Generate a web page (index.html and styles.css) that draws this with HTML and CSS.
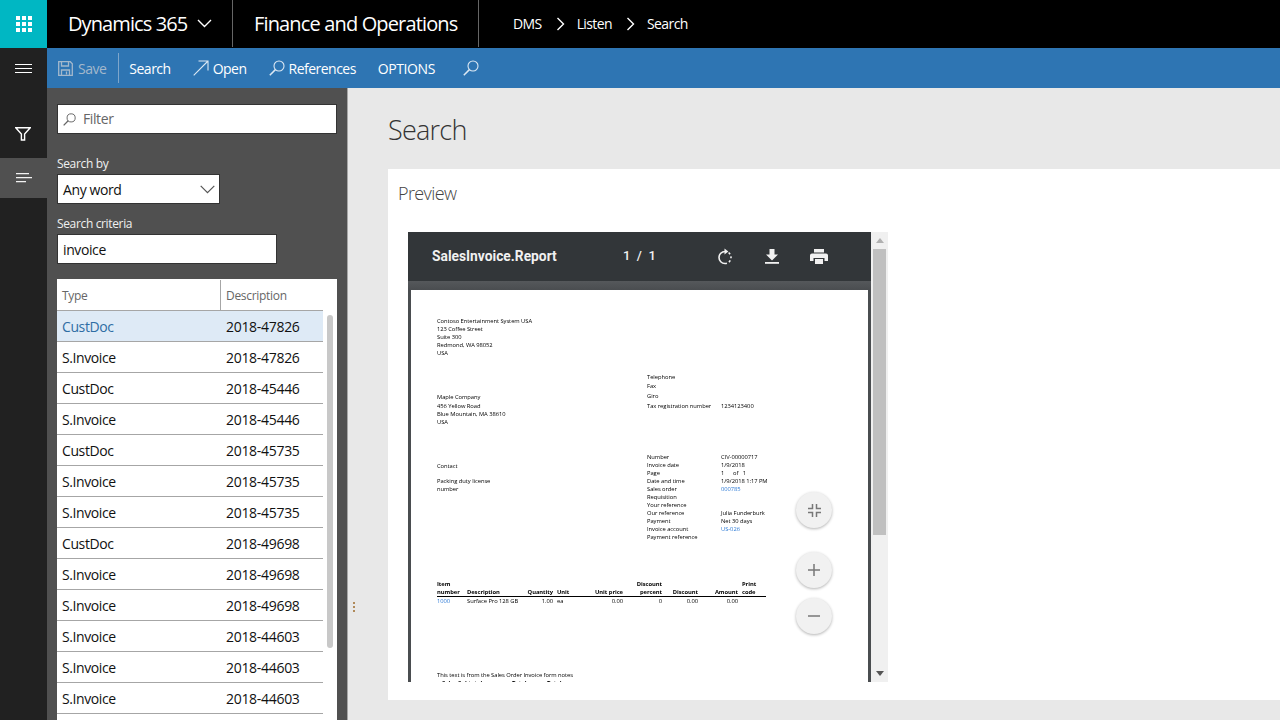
FILE: index.html
```html
<!DOCTYPE html>
<html lang="en">
<head>
<meta charset="utf-8">
<title>Search</title>
<link rel="stylesheet" href="styles.css">
</head>
<body>
<header class="topbar">
  <div class="waffle">
    <svg width="16" height="16" viewBox="0 0 16 16" fill="#fff"><rect x="0" y="0" width="4" height="4"/><rect x="6" y="0" width="4" height="4"/><rect x="12" y="0" width="4" height="4"/><rect x="0" y="6" width="4" height="4"/><rect x="6" y="6" width="4" height="4"/><rect x="12" y="6" width="4" height="4"/><rect x="0" y="12" width="4" height="4"/><rect x="6" y="12" width="4" height="4"/><rect x="12" y="12" width="4" height="4"/></svg>
  </div>
  <div class="brand">
    <span class="brand-text">Dynamics 365</span>
    <svg class="brand-chev" width="15" height="9" viewBox="0 0 15 9" fill="none" stroke="#fff" stroke-width="1.4"><path d="M1 1l6.5 6.5L14 1"/></svg>
  </div>
  <div class="app">Finance and Operations</div>
  <nav class="crumbs">
    <span>DMS</span>
    <svg width="9" height="14" viewBox="0 0 9 14" fill="none" stroke="#fff" stroke-width="1.4"><path d="M1.5 1l6 6-6 6"/></svg>
    <span>Listen</span>
    <svg width="9" height="14" viewBox="0 0 9 14" fill="none" stroke="#fff" stroke-width="1.4"><path d="M1.5 1l6 6-6 6"/></svg>
    <span>Search</span>
  </nav>
</header>

<div class="shell">
  <aside class="rail">
    <div class="rail-btn rail-menu">
      <svg width="17" height="10" viewBox="0 0 17 10" stroke="#fff" stroke-width="1"><path d="M0 .5h17M0 4.500h17M0 8.500h17"/></svg>
    </div>
    <div class="rail-btn rail-filter">
      <svg width="16" height="14" viewBox="0 0 16 14" fill="none" stroke="#fff" stroke-width="1.4"><path d="M.8.8h14.400L9.600 7v6H6.400V7z"/></svg>
    </div>
    <div class="rail-btn rail-active">
      <svg width="16" height="10" viewBox="0 0 16 10" stroke="#f2f2f2" stroke-width="1.3"><path d="M0 .7h13M0 4.700h16M0 8.700h10"/></svg>
    </div>
  </aside>

  <div class="workspace">
    <div class="actions">
      <span class="act act-save">
        <svg width="15" height="15" viewBox="0 0 15 15" fill="none" stroke="#a3b8cc" stroke-width="1.3"><path d="M.7.7h11.600l2 2v11.600H.7z"/><path d="M3.500.7v4.300h7V.7M3.500 14.300V9h8v5.300"/><path d="M8.500 10.500v3"/></svg>
        <span>Save</span>
      </span>
      <span class="act-sep"></span>
      <span class="act act-search">Search</span>
      <span class="act act-open">
        <svg width="16" height="16" viewBox="0 0 16 16" fill="none" stroke="#dce8f3" stroke-width="1.100"><path d="M.7 15.300L15 1M5.500 1H15v9.500"/></svg>
        <span>Open</span>
      </span>
      <span class="act act-refs">
        <svg class="lens" width="16" height="16" viewBox="0 0 16 16" fill="none" stroke="#dce8f3" stroke-width="1.100"><circle cx="10" cy="6" r="5"/><path d="M6.400 9.600L.8 15.200" stroke-width="1.500"/></svg>
        <span>References</span>
      </span>
      <span class="act act-options">OPTIONS</span>
      <span class="act act-find">
        <svg class="lens" width="16" height="16" viewBox="0 0 16 16" fill="none" stroke="#dce8f3" stroke-width="1.100"><circle cx="10" cy="6" r="5"/><path d="M6.400 9.600L.8 15.200" stroke-width="1.500"/></svg>
      </span>
    </div>

    <div class="body">
      <section class="panel">
        <div class="field filter">
          <svg width="13" height="13" viewBox="0 0 16 16" fill="none" stroke="#666" stroke-width="1.200"><circle cx="10" cy="6" r="5"/><path d="M6.400 9.600L.8 15.200" stroke-width="1.600"/></svg>
          <span>Filter</span>
        </div>
        <label class="lbl lbl-by">Search by</label>
        <div class="field select">
          <span>Any word</span>
          <svg width="15" height="9" viewBox="0 0 15 9" fill="none" stroke="#555" stroke-width="1.200"><path d="M.7.8l6.800 6.800L14.300.8"/></svg>
        </div>
        <label class="lbl lbl-crit">Search criteria</label>
        <div class="field criteria"><span>invoice</span></div>

        <div class="grid">
          <div class="grid-head">
            <div class="col-type">Type</div>
            <div class="col-desc">Description</div>
          </div>
          <div class="grid-body">
            <div class="row row-sel"><span class="c1">CustDoc</span><span class="c2">2018-47826</span></div>
            <div class="row"><span class="c1">S.Invoice</span><span class="c2">2018-47826</span></div>
            <div class="row"><span class="c1">CustDoc</span><span class="c2">2018-45446</span></div>
            <div class="row"><span class="c1">S.Invoice</span><span class="c2">2018-45446</span></div>
            <div class="row"><span class="c1">CustDoc</span><span class="c2">2018-45735</span></div>
            <div class="row"><span class="c1">S.Invoice</span><span class="c2">2018-45735</span></div>
            <div class="row"><span class="c1">S.Invoice</span><span class="c2">2018-45735</span></div>
            <div class="row"><span class="c1">CustDoc</span><span class="c2">2018-49698</span></div>
            <div class="row"><span class="c1">S.Invoice</span><span class="c2">2018-49698</span></div>
            <div class="row"><span class="c1">S.Invoice</span><span class="c2">2018-49698</span></div>
            <div class="row"><span class="c1">S.Invoice</span><span class="c2">2018-44603</span></div>
            <div class="row"><span class="c1">S.Invoice</span><span class="c2">2018-44603</span></div>
            <div class="row"><span class="c1">S.Invoice</span><span class="c2">2018-44603</span></div>
          </div>
          <div class="grid-scroll"></div>
        </div>
      </section>

      <main class="content">
        <div class="grip"><i></i><i></i><i></i></div>
        <h1 class="title">Search</h1>
        <div class="card">
          <h2 class="preview-h">Preview</h2>
          <div class="viewer">
            <div class="pdf">
              <div class="pdf-bar">
                <span class="pdf-name">SalesInvoice.Report</span>
                <span class="pdf-pages">1&nbsp;&nbsp;/&nbsp;&nbsp;1</span>
                <svg class="ic-rot" width="16" height="17" viewBox="0 0 16 17" fill="none" stroke="#f1f1f1" stroke-width="1.600"><path d="M8 3.500a6 6 0 0 0 0 12"/><path d="M8 15.500a6 6 0 0 0 0-12" stroke-dasharray="2 2.200"/><path d="M7.500.5v6l3.800-3z" fill="#f1f1f1" stroke="none"/></svg>
                <svg class="ic-down" width="14" height="15" viewBox="0 0 14 15" fill="#f1f1f1"><path d="M4.500 0h5v5.500H13l-6 6-6-6h3.500z"/><rect x="0" y="13" width="14" height="1.800"/></svg>
                <svg class="ic-print" width="18" height="15" viewBox="0 0 18 15" fill="#f1f1f1"><path d="M4 0h10v3.500H4z"/><path d="M2 4.500h14a2 2 0 0 1 2 2V12h-3.500V9h-11v3H0V6.500a2 2 0 0 1 2-2z"/><path d="M5 10h8v5H5z"/></svg>
              </div>
              <div class="pdf-stage">
                <div class="page">
                  <div class="addr">
                    <p>Contoso Entertainment System USA</p>
                    <p>123 Coffee Street</p>
                    <p>Suite 300</p>
                    <p>Redmond, WA 98052</p>
                    <p>USA</p>
                  </div>
                  <div class="two two-a">
                    <div class="left-a">
                      <p>Maple Company</p>
                      <p class="ga1">456 Yellow Road</p>
                      <p>Blue Mountain, MA 38610</p>
                      <p>USA</p>
                    </div>
                    <div class="right-a">
                      <p>Telephone</p>
                      <p class="ga1">Fax</p>
                      <p class="ga2">Giro</p>
                      <p class="ga2 kv"><span>Tax registration number</span><span>1234123400</span></p>
                    </div>
                  </div>
                  <div class="two two-b">
                    <div class="left-b">
                      <p>Contact</p>
                      <p class="gb">Packing duty license</p>
                      <p>number</p>
                    </div>
                    <div class="right-b">
                      <p class="kv"><span>Number</span><span>CIV-00000717</span></p>
                      <p class="kv"><span>Invoice date</span><span>1/9/2018</span></p>
                      <p class="kv"><span>Page</span><span>1&nbsp;&nbsp;&nbsp;&nbsp;&nbsp;&nbsp;of&nbsp;&nbsp;&nbsp;1</span></p>
                      <p class="kv"><span>Date and time</span><span>1/9/2018 1:17 PM</span></p>
                      <p class="kv"><span>Sales order</span><span class="lnk">000785</span></p>
                      <p class="kv"><span>Requisition</span></p>
                      <p class="kv"><span>Your reference</span></p>
                      <p class="kv"><span>Our reference</span><span>Julia Funderburk</span></p>
                      <p class="kv"><span>Payment</span><span>Net 30 days</span></p>
                      <p class="kv"><span>Invoice account</span><span class="lnk">US-026</span></p>
                      <p class="kv"><span>Payment reference</span></p>
                    </div>
                  </div>
                  <div class="lines lines-head">
                    <span>Item<br>number</span>
                    <span>Description</span>
                    <span class="r">Quantity</span>
                    <span class="u">Unit</span>
                    <span class="r">Unit price</span>
                    <span class="r">Discount<br>percent</span>
                    <span class="r">Discount</span>
                    <span class="r">Amount</span>
                    <span class="u">Print<br>code</span>
                  </div>
                  <div class="lines lines-row">
                    <span class="lnk">1000</span>
                    <span>Surface Pro 128 GB</span>
                    <span class="r">1.00</span>
                    <span class="u">ea</span>
                    <span class="r">0.00</span>
                    <span class="r">0</span>
                    <span class="r">0.00</span>
                    <span class="r">0.00</span>
                    <span></span>
                  </div>
                  <p class="note">This text is from the Sales Order Invoice form notes</p>
                  <p class="totals"><span>Sales Subtotal</span><span>Total</span><span>Total</span></p>
                </div>
                <div class="fabs">
                  <div class="fab fab-fit">
                    <svg width="13" height="13" viewBox="0 0 13 13" fill="none" stroke="#777" stroke-width="1.500"><path d="M0 4.500h4.500V0M13 4.500H8.500V0M0 8.500h4.500V13M13 8.500H8.500V13"/></svg>
                  </div>
                  <div class="fab fab-plus">
                    <svg width="12" height="12" viewBox="0 0 12 12" fill="none" stroke="#777" stroke-width="1.500"><path d="M6 0v12M0 6h12"/></svg>
                  </div>
                  <div class="fab">
                    <svg width="12" height="2" viewBox="0 0 12 2" fill="none" stroke="#777" stroke-width="1.500"><path d="M0 1h12"/></svg>
                  </div>
                </div>
              </div>
            </div>
            <div class="pdf-scroll">
              <span class="arr-up"></span>
              <span class="pdf-thumb"></span>
              <span class="arr-down"></span>
            </div>
          </div>
        </div>
      </main>
    </div>
  </div>
</div>
</body>
</html>
```

FILE: styles.css
```css
* { box-sizing: border-box; }
html, body { margin: 0; height: 100%; overflow: hidden; }
body { font-family: "Open Sans", "Noto Sans", "Liberation Sans", sans-serif; font-size: 14px; color: #000; width: 1280px; height: 720px; background: #e8e8e8; }
p, h1, h2 { margin: 0; font-weight: normal; }

/* top bar */
.topbar { display: flex; height: 48px; background: #000; color: #fff; }
.waffle { width: 47px; height: 48px; background: #00b7c3; display: flex; align-items: center; justify-content: center; }
.brand { width: 186px; display: flex; align-items: center; padding-left: 21px; border-right: 1px solid #666; height: 47px; }
.brand-text { font-size: 20px; letter-spacing: -0.9px; }
.brand-chev { margin-left: 10px; margin-top: -1px; }
.app { width: 246px; padding-left: 21px; font-size: 20px; line-height: 47px; height: 47px; letter-spacing: -0.85px; border-right: 1px solid #666; white-space: nowrap; }
.crumbs { display: flex; align-items: center; padding-left: 34px; height: 47px; font-size: 14px; letter-spacing: -0.6px; }
.crumbs svg { margin: 0 12px 0 14px; }

/* shell */
.shell { display: flex; height: 672px; }
.rail { width: 47px; background: #212121; display: flex; flex-direction: column; }
.rail-btn { height: 40px; display: flex; align-items: center; justify-content: center; }
.rail-menu { padding-top: 1px; }
.rail-filter { margin-top: 22px; height: 48px; padding-right: 1px; }
.rail-active { background: #505050; }
.workspace { flex: 1; display: flex; flex-direction: column; min-width: 0; }

/* action bar */
.actions { height: 40px; background: #2e75b3; display: flex; align-items: center; color: #fff; font-size: 14px; letter-spacing: -0.5px; white-space: nowrap; }
.act { display: inline-flex; align-items: center; }
.act-save { margin-left: 11px; color: #a3b8cc; }
.act-save svg { margin-right: 5px; }
.act-sep { width: 1px; height: 30px; background: #7ea6cb; margin-left: 12px; }
.act-search { margin-left: 10px; }
.act-open { margin-left: 22px; }
.act-open svg, .act-refs svg { margin-right: 4px; }
.act-refs { margin-left: 22px; }
.act-refs span { letter-spacing: -0.52px; }
.act-options { margin-left: 22px; letter-spacing: -0.42px; }
.act-find { margin-left: 28px; }

.body { flex: 1; display: flex; min-height: 0; }

/* side panel */
.panel { width: 301px; background: #505050; border-right: 1px solid #a6a6a6; padding: 16px 10px 0; overflow: hidden; flex: none; }
.field { background: #fff; border: 1px solid #333; height: 30px; display: flex; align-items: center; padding-left: 5px; font-size: 14px; letter-spacing: -0.4px; color: #111; }
.filter { width: 280px; color: #666; padding-bottom: 2px; }
.filter svg { margin-right: 7px; margin-top: 2px; }
.lbl { display: block; color: #f0f0f0; font-size: 12px; letter-spacing: -0.35px; line-height: 16px; }
.lbl-by { margin-top: 22px; }
.select { width: 163px; margin-top: 2px; justify-content: space-between; padding-right: 4px; }
.lbl-crit { margin-top: 12px; }
.criteria { width: 220px; margin-top: 2px; }

.grid { position: relative; width: 280px; margin-top: 15px; background: #fff; height: 460px; overflow: hidden; }
.grid-head { display: flex; height: 32px; width: 266px; border-bottom: 1px solid #a6a6a6; padding-top: 1px; color: #666; font-size: 12px; letter-spacing: -0.3px; line-height: 31px; }
.col-type { width: 164px; padding-left: 5px; border-right: 1px solid #a6a6a6; }
.col-desc { padding-left: 5px; }
.grid-body { width: 266px; }
.row { display: flex; height: 31px; border-bottom: 1px solid #a6a6a6; line-height: 32px; font-size: 14px; letter-spacing: -0.4px; color: #111; }
.row-sel { background: #deeaf6; }
.row-sel .c1 { color: #2e6da4; }
.c1 { width: 164px; padding-left: 5px; }
.c2 { padding-left: 5px; letter-spacing: -0.3px; }
.grid-scroll { position: absolute; left: 270px; top: 36px; width: 6px; height: 333px; background: #c8c8c8; border-radius: 3px; }

/* content */
.content { position: relative; flex: 1; min-width: 0; padding: 22px 0 0 40px; background: #e8e8e8; overflow: hidden; }
.grip { position: absolute; left: 5px; top: 514px; width: 2px; display: flex; flex-direction: column; gap: 2px; }
.grip i { display: block; width: 2px; height: 2px; background: #b08a5a; }
.title { font-size: 27px; font-weight: 300; letter-spacing: -0.75px; line-height: 40px; color: #333; }
.card { background: #fff; margin-top: 19px; height: 531px; padding: 12px 0 0 10px; }
.preview-h { font-size: 18px; font-weight: 300; letter-spacing: -0.6px; line-height: 24px; color: #444; }
.viewer { display: flex; width: 480px; height: 450px; margin: 27px 0 0 10px; }

/* pdf viewer */
.pdf { width: 463px; height: 450px; background: #4a4d50; display: flex; flex-direction: column; overflow: hidden; flex: none; }
.pdf-bar { height: 49px; background: #323639; display: flex; align-items: center; color: #f1f1f1; flex: none; }
.pdf-name { font-family: Roboto, "Liberation Sans", sans-serif; font-weight: 700; font-size: 13.800px; margin: -2px 0 0 24px; width: 191px; white-space: nowrap; }
.pdf-pages { font-family: Roboto, "Liberation Sans", sans-serif; font-weight: 500; font-size: 13px; width: 94px; margin-top: -2px; }
.ic-rot { margin-right: 32px; }
.ic-down { margin-right: 31px; }
.pdf-stage { position: relative; flex: 1; background: linear-gradient(#55585b, #4a4d50 9px); padding: 9px 3px 0; min-height: 0; }
.page { background: #fff; height: 500px; padding: 27px 0 0 26px; font-family: "Open Sans", "Noto Sans", sans-serif; font-size: 5.800px; letter-spacing: -0.05px; line-height: 8px; color: #000; filter: blur(0.25px); }
.two { display: flex; }
.two-a { margin-top: 16px; height: 54px; }
.left-a { width: 210px; margin-top: 20px; }
.ga1 { margin-top: 1px; }
.ga2 { margin-top: 2px; }
.kv { display: flex; }
.kv span:first-child { width: 74px; flex: none; }
.two-b { margin-top: 26px; }
.left-b { width: 210px; margin-top: 9px; }
.gb { margin-top: 7px; }
.lnk { color: #2e7bd6; }
.lines { display: grid; grid-template-columns: 30px 50px 36px 24px 46px 39px 36px 40px 28px; width: 329px; }
.lines-head { margin-top: 39px; font-weight: 700; color: #000; align-items: end; border-bottom: 1px solid #000; height: 17px; }
.lines-head span { white-space: nowrap; }
.lines-row { margin-top: 0; }
.lines-row span { white-space: nowrap; }
.r { text-align: right; }
.u { padding-left: 4px; }
.note { margin-top: 66px; }
.totals { display: flex; padding-left: 5px; font-weight: 700; }
.totals span:first-child { width: 70px; }
.totals span:nth-child(2) { width: 35px; }

.fabs { position: absolute; left: 388px; top: 211px; display: flex; flex-direction: column; }
.fab { width: 36px; height: 36px; border-radius: 50%; background: #f1f1f1; box-shadow: 0 1px 3px rgba(0,0,0,.3); display: flex; align-items: center; justify-content: center; margin-bottom: 10px; }
.fab-fit { margin-bottom: 24px; }

.pdf-scroll { position: relative; width: 17px; background: #f0f0f0; }
.pdf-thumb { position: absolute; left: 2px; top: 17px; width: 13px; height: 286px; background: #c0c0c0; }
.arr-up, .arr-down { position: absolute; left: 5px; width: 0; height: 0; border-left: 4px solid transparent; border-right: 4px solid transparent; }
.arr-up { top: 6px; border-bottom: 5px solid #b0b0b0; }
.arr-down { bottom: 6px; border-top: 5px solid #555; }
```
